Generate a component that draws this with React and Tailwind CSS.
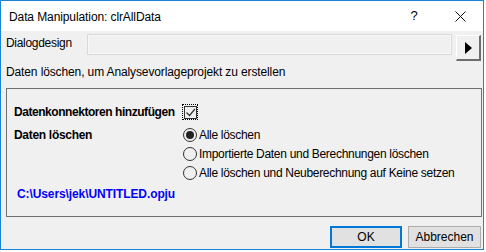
export default function App() {
  const font = { fontFamily: '"Liberation Sans", Arial, sans-serif' };
  return (
    <div className="w-[486px] h-[252px] bg-white text-[12px] leading-[16px] text-black whitespace-nowrap" style={font}>
      <div className="w-[484px] h-[250px] border border-[#1883d7] flex flex-col">
        {/* title bar */}
        <div className="h-[30px] bg-white flex items-center pl-[8px] shrink-0">
          <span className="flex-1 pt-[1px] tracking-[-0.1px]">Data Manipulation: clrAllData</span>
          <span className="w-[46px] text-center text-[13px]">?</span>
          <span className="w-[46px] flex items-center justify-center">
            <svg width="11" height="11" viewBox="0 0 11 11">
              <path d="M0.5 0.5 L10.5 10.5 M10.5 0.5 L0.5 10.5" stroke="#111" strokeWidth="1" />
            </svg>
          </span>
        </div>

        {/* body */}
        <div className="flex-1 bg-[#f0f0f0] pl-[4px] flex flex-col tracking-[-0.3px]">
          <div className="mt-[3px] flex items-start h-[27px]">
            <span className="w-[82px] pl-[1px] mt-[1px]">Dialogdesign</span>
            <div className="w-[365px] h-[21px] border border-[#d9d9d9] bg-[#f0f0f0] shadow-[inset_0_0_0_1px_#f7f7f7]" />
            <div className="ml-[4px] mt-[1px] w-[25px] h-[26px] bg-[#f0f0f0] border-t border-l border-white border-r-[2px] border-b-[2px] border-r-[#6d6d6d] border-b-[#6d6d6d] flex items-center justify-center">
              <svg width="7" height="12" viewBox="0 0 7 12">
                <path d="M0 0 L7 6 L0 12 Z" fill="#000" />
              </svg>
            </div>
          </div>

          <div className="mt-[3px] pl-[1px] tracking-[-0.12px]">Daten löschen, um Analysevorlageprojekt zu erstellen</div>

          <div className="mt-[8px] ml-[1px] w-[476px] h-[129px] border border-[#707070] flex flex-col pl-[7px]">
            <div className="mt-[15px] flex items-center h-[16px]">
              <span className="w-[168px] font-bold tracking-[-0.45px]">Datenkonnektoren hinzufügen</span>
              <div className="w-[16px] h-[16px] border border-dotted border-black flex items-center justify-center">
                <div className="w-[13px] h-[13px] border border-[#333] bg-[#f0f0f0] flex items-center justify-center">
                  <svg width="11" height="11" viewBox="0 0 11 11">
                    <path d="M1.5 5.5 L4.5 8.5 L10 2" stroke="#333" strokeWidth="1.2" fill="none" />
                  </svg>
                </div>
              </div>
            </div>

            <div className="mt-[5px] flex">
              <span className="w-[169px] font-bold h-[19px] flex items-center tracking-[-0.3px]">Daten löschen</span>
              <div className="flex flex-col">
                {[
                  ['Alle löschen', true],
                  ['Importierte Daten und Berechnungen löschen', false],
                  ['Alle löschen und Neuberechnung auf Keine setzen', false],
                ].map(([label, on], i) => (
                  <div key={i} className="h-[19px] flex items-center">
                    <span className="w-[14px] h-[14px] rounded-full border border-[#333] bg-[#f0f0f0] flex items-center justify-center">
                      {on && <span className="w-[8px] h-[8px] rounded-full bg-[#222]" />}
                    </span>
                    <span className="ml-[2px]">{label}</span>
                  </div>
                ))}
              </div>
            </div>

            <div className="mt-[4px] pl-[3px] font-bold text-[#0000ff] tracking-[-0.1px]">C:\Users\jek\UNTITLED.opju</div>
          </div>

          <div className="mt-[9px] flex justify-end gap-[6px] pr-[2px] tracking-normal">
            <button className="w-[72px] h-[22px] bg-[#e1e1e1] border-[2px] border-[#0078d7] leading-[16px]">OK</button>
            <button className="w-[73px] h-[22px] bg-[#e1e1e1] border border-[#adadad] leading-[16px]">Abbrechen</button>
          </div>
        </div>
      </div>
    </div>
  );
}
